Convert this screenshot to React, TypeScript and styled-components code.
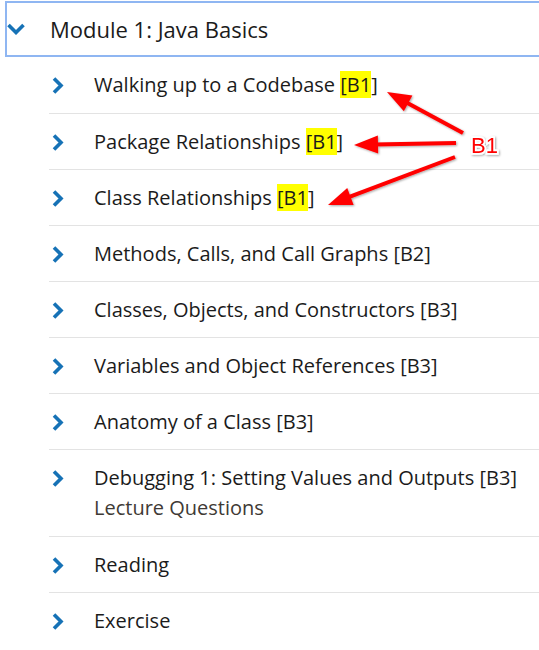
import styled, { createGlobalStyle } from 'styled-components';

const Global = createGlobalStyle`
  body {
    margin: 0;
    background: #fff;
    font-family: "Open Sans", "Liberation Sans", sans-serif;
    color: #1b1b1b;
  }
`

const Page = styled.div`
  position: relative;
  width: 539px;
  height: 650px;
  overflow: hidden;
`

const ModuleHeader = styled.div`
  display: flex;
  align-items: center;
  height: 52px;
  margin: 1px 0 0 5px;
  border: 2px solid #8fb6f2;
  border-right: none;
  font-size: 22px;
  gap: 25px;
`

const List = styled.ul`
  list-style: none;
  margin: 0;
  padding: 0 0 0 49px;
`

const Row = styled.li<{ $tall?: boolean; $first?: boolean }>`
  display: flex;
  align-items: flex-start;
  height: ${(p) => (p.$tall ? 87 : 56)}px;
  border-top: ${(p) => (p.$first ? 'none' : '1px solid #e3e3e3')};
  box-sizing: border-box;
  padding-top: 13px;
  font-size: 20px;
  line-height: 30px;
`

const Chevron = styled.span`
  width: 45px;
  flex: none;
  padding-left: 3px;
  box-sizing: border-box;
  display: flex;
  align-items: center;
  height: 30px;
`

const Label = styled.div`
  display: flex;
  flex-direction: column;
`

const Sub = styled.span`
  color: #403a35;
`

const Mark = styled.span`
  background: #ffff00;
`

const Overlay = styled.svg`
  position: absolute;
  left: 0;
  top: 0;
  pointer-events: none;
`

const Right = () => (
  <svg width="12" height="17" viewBox="0 0 12 17">
    <path d="M2 1.5 L9 8.5 L2 15.5" fill="none" stroke="#1672b6" strokeWidth="3.6" />
  </svg>
)

const Down = () => (
  <svg width="18" height="12" viewBox="0 0 18 12">
    <path d="M1.5 2 L9 9.5 L16.5 2" fill="none" stroke="#1672b6" strokeWidth="3.6" />
  </svg>
)

const B1 = () => (
  <>
    <Mark>[B1</Mark>]
  </>
)

type Item = { text: string; tag?: string; mark?: boolean; sub?: string }

const items: Item[] = [
  { text: 'Walking up to a Codebase', mark: true },
  { text: 'Package Relationships', mark: true },
  { text: 'Class Relationships', mark: true },
  { text: 'Methods, Calls, and Call Graphs', tag: '[B2]' },
  { text: 'Classes, Objects, and Constructors', tag: '[B3]' },
  { text: 'Variables and Object References', tag: '[B3]' },
  { text: 'Anatomy of a Class', tag: '[B3]' },
  { text: 'Debugging 1: Setting Values and Outputs', tag: '[B3]', sub: 'Lecture Questions' },
  { text: 'Reading' },
  { text: 'Exercise' },
]

function Arrow({ x1, y1, x2, y2 }: { x1: number; y1: number; x2: number; y2: number }) {
  const a = Math.atan2(y2 - y1, x2 - x1)
  const len = 24
  const w = 9
  const bx = x2 - Math.cos(a) * len
  const by = y2 - Math.sin(a) * len
  const px = -Math.sin(a) * w
  const py = Math.cos(a) * w
  return (
    <g>
      <line x1={x1} y1={y1} x2={bx + Math.cos(a) * 4} y2={by + Math.sin(a) * 4} stroke="#f00" strokeWidth="4" />
      <polygon points={`${x2},${y2} ${bx + px},${by + py} ${bx - px},${by - py}`} fill="#f00" />
    </g>
  )
}

function App() {
  return (
    <Page>
      <Global />
      <ModuleHeader>
        <Down />
        <span>Module 1: Java Basics</span>
      </ModuleHeader>
      <List>
        {items.map((it, i) => (
          <Row key={it.text} $first={i === 0} $tall={!!it.sub}>
            <Chevron>
              <Right />
            </Chevron>
            <Label>
              <span>
                {it.text} {it.mark ? <B1 /> : it.tag}
              </span>
              {it.sub && <Sub>{it.sub}</Sub>}
            </Label>
          </Row>
        ))}
      </List>
      <Overlay width="539" height="650">
        <defs>
          <filter id="sh" x="-20%" y="-20%" width="140%" height="140%">
            <feDropShadow dx="1" dy="1" stdDeviation="1.2" floodColor="#000" floodOpacity="0.35" />
          </filter>
        </defs>
        <g filter="url(#sh)">
          <Arrow x1={463} y1={133} x2={387} y2={92} />
          <Arrow x1={456} y1={143} x2={354} y2={145} />
          <Arrow x1={455} y1={157} x2={328} y2={205} />
          <text
            x="471"
            y="153"
            fill="#f00"
            stroke="#fff"
            strokeWidth="3.5"
            paintOrder="stroke"
            fontFamily="Liberation Sans, Arial, sans-serif"
            fontSize="22"
          >
            B1
          </text>
        </g>
      </Overlay>
    </Page>
  )
}

export default App
